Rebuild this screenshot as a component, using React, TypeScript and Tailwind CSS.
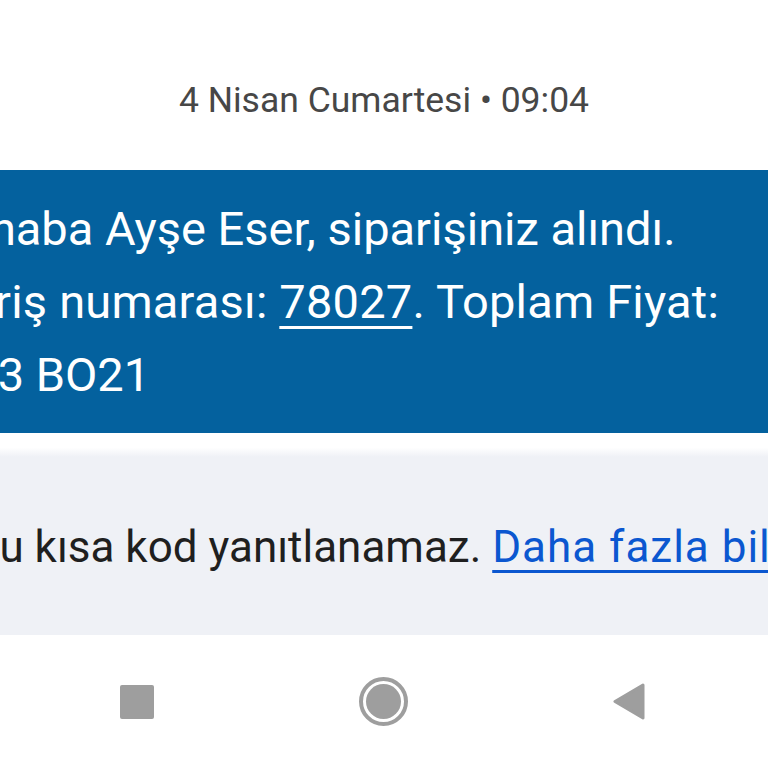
import React from 'react';

const font = { fontFamily: 'Roboto, "Noto Sans", sans-serif' };

function NavBar() {
  return (
    <div className="flex h-[133px] items-center justify-between bg-white pl-[120px] pr-[123px]">
      <div className="h-[34px] w-[34px] rounded-[2px] bg-[#9e9e9e]" />
      <div className="flex h-[49px] w-[49px] items-center justify-center rounded-full border-[4px] border-[#9e9e9e]">
        <div className="h-[35px] w-[35px] rounded-full bg-[#9e9e9e]" />
      </div>
      <svg width="32" height="37" viewBox="0 0 32 37">
        <path d="M30 2 L2 18.5 L30 35 Z" fill="#9e9e9e" stroke="#9e9e9e" strokeWidth="3" strokeLinejoin="round" />
      </svg>
    </div>
  );
}

export default function App() {
  return (
    <div className="flex h-[768px] w-[768px] flex-col overflow-hidden bg-white" style={font}>
      <div className="h-[170px] pt-[79px] text-center text-[35.5px] leading-[43px] text-[#474747]">
        4 Nisan Cumartesi • 09:04
      </div>

      <div className="h-[263px] overflow-hidden bg-[#04619e] pt-[22px] shadow-[0_1px_0_#2c5573]">
        <div className="whitespace-nowrap text-[47px] leading-[73px] text-white">
          <p className="ml-[-92px]">Merhaba Ayşe Eser, siparişiniz alındı.</p>
          <p className="ml-[-97px] tracking-[0.2px]">
            Sipariş numarası:{' '}
            <span className="underline decoration-[3px] underline-offset-[8px]">78027</span>. Toplam Fiyat:
          </p>
          <p className="ml-[-94px]">1.253 BO21</p>
        </div>
      </div>

      <div className="h-[24px] bg-gradient-to-b from-white from-60% to-[#eff1f6]" />

      <div className="h-[178px] overflow-hidden bg-[#eff1f6] pt-[64px]">
        <p className="ml-[-28px] whitespace-nowrap text-[44px] leading-[52px] text-[#1f1f1f]">
          Bu kısa kod yanıtlanamaz.{' '}
          <span className="tracking-[1px] text-[#0b57d0] underline decoration-[3px] underline-offset-[8px]">
            Daha fazla bilgi edinin
          </span>
        </p>
      </div>

      <NavBar />
    </div>
  );
}
